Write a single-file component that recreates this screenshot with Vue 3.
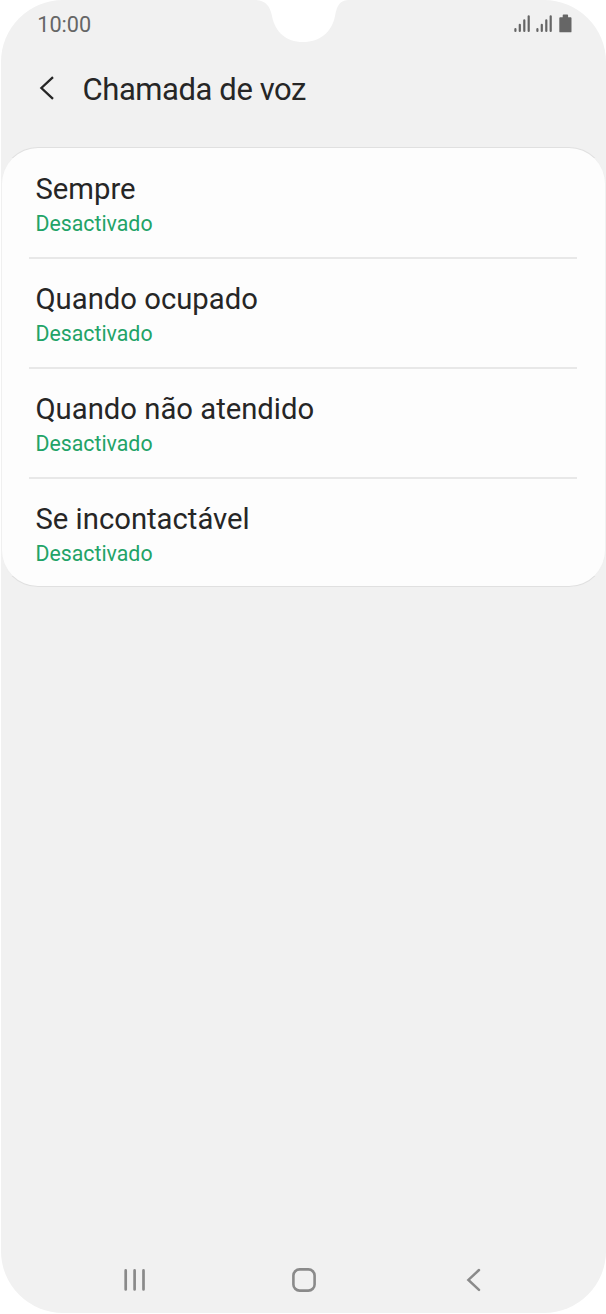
<script setup>
const items = [
  { title: 'Sempre', state: 'Desactivado' },
  { title: 'Quando ocupado', state: 'Desactivado' },
  { title: 'Quando não atendido', state: 'Desactivado' },
  { title: 'Se incontactável', state: 'Desactivado' },
]
</script>

<template>
  <div class="phone">
    <svg class="notch" width="92" height="43" viewBox="0 0 92 43">
      <path d="M0 0C10 1 14 6 16 16C19 32 30 42 47 42C64 42 76 32 79 16C81 6 83 1 92 0Z" fill="#fff" />
    </svg>
    <header class="status">
      <span class="time">10:00</span>
      <svg class="indicators" width="60" height="20" viewBox="0 0 60 20">
        <g stroke="#666" stroke-width="2.2" stroke-linecap="round">
          <path d="M2.4 15.2v1.7M6.8 10.8v6.1M11.3 6.3v10.6M15.7 2.3v14.6" />
          <path d="M24.4 15.2v1.7M28.8 10.8v6.1M33.3 6.3v10.6M37.7 2.3v14.6" />
        </g>
        <path d="M47.2 3.3h2.5V1.4q0-.8.8-.8h3.8q.8 0 .8.8v1.9h2.5q.9 0 .9.9v13.2q0 .9-.9.9H47.2q-.9 0-.9-.9V4.2q0-.9.9-.9Z" fill="#666" />
      </svg>
    </header>
    <div class="titlebar">
      <svg width="20" height="26" viewBox="0 0 20 26" fill="none" stroke="#262626" stroke-width="2.3">
        <path d="M17 2.2 5.4 13 17 23.9" />
      </svg>
      <h1>Chamada de voz</h1>
    </div>
    <main class="card">
      <section v-for="item in items" :key="item.title" class="row">
        <h2>{{ item.title }}</h2>
        <p>{{ item.state }}</p>
      </section>
    </main>
    <nav class="nav">
      <svg width="24" height="26" viewBox="0 0 24 26" stroke="#8a8a8a" stroke-width="2.7" stroke-linecap="round">
        <path d="M2.7 3.4v19M11.6 3.4v19M20.5 3.4v19" />
      </svg>
      <svg width="26" height="26" viewBox="0 0 26 26" fill="none" stroke="#8a8a8a" stroke-width="2.6">
        <rect x="2.4" y="2.4" width="21.2" height="21.2" rx="6.2" />
      </svg>
      <svg width="18" height="26" viewBox="0 0 18 26" fill="none" stroke="#8a8a8a" stroke-width="2.5" stroke-linecap="round">
        <path d="M14 3 3.4 12.9 14 22.8" />
      </svg>
    </nav>
  </div>
</template>

<style>
body {
  background: #fff;
}
</style>

<style scoped>
.phone {
  position: relative;
  box-sizing: border-box;
  display: flex;
  flex-direction: column;
  width: 605px;
  height: 1313.4px;
  margin-left: 0.6px;
  overflow: hidden;
  border-radius: 62px;
  background: #f1f1f1;
  font-family: Roboto, sans-serif;
}
.notch {
  position: absolute;
  top: 0;
  left: 255.4px;
}
.status {
  display: flex;
  justify-content: space-between;
  height: 60px;
  padding: 10px 32.6px 0 36.6px;
  box-sizing: border-box;
}
.time {
  font-size: 21.7px;
  line-height: 29px;
  color: #666;
}
.indicators {
  margin-top: 4px;
}
.titlebar {
  display: flex;
  align-items: flex-start;
  height: 87px;
  padding: 15px 0 0 35.4px;
  box-sizing: border-box;
}
h1 {
  margin: -3px 0 0 26.5px;
  font-size: 31px;
  letter-spacing: -0.42px;
  line-height: 36px;
  font-weight: 400;
  color: #262626;
}
.card {
  box-sizing: border-box;
  height: 440.4px;
  padding: 1px 27.6px 0;
  border: 1px solid;
  border-color: #e0e0e0 #f0f0f0;
  border-radius: 37px;
  background: #fdfdfd;
}
.row {
  box-sizing: border-box;
  height: 110px;
  padding: 22px 0 0 6.3px;
  border-bottom: 2px solid #e8e8e8;
}
.row:last-child {
  height: 108px;
  border-bottom: 0;
}
h2 {
  margin: 0;
  font-size: 29.25px;
  line-height: 36px;
  font-weight: 400;
  color: #262626;
}
p {
  margin: 0;
  font-size: 21.3px;
  line-height: 33px;
  color: #22a367;
}
.nav {
  display: flex;
  align-items: center;
  margin-top: auto;
  height: 67px;
  padding-left: 122.4px;
}
.nav svg:nth-child(2) {
  margin-left: 144px;
}
.nav svg:nth-child(3) {
  margin-left: 148px;
}
</style>
